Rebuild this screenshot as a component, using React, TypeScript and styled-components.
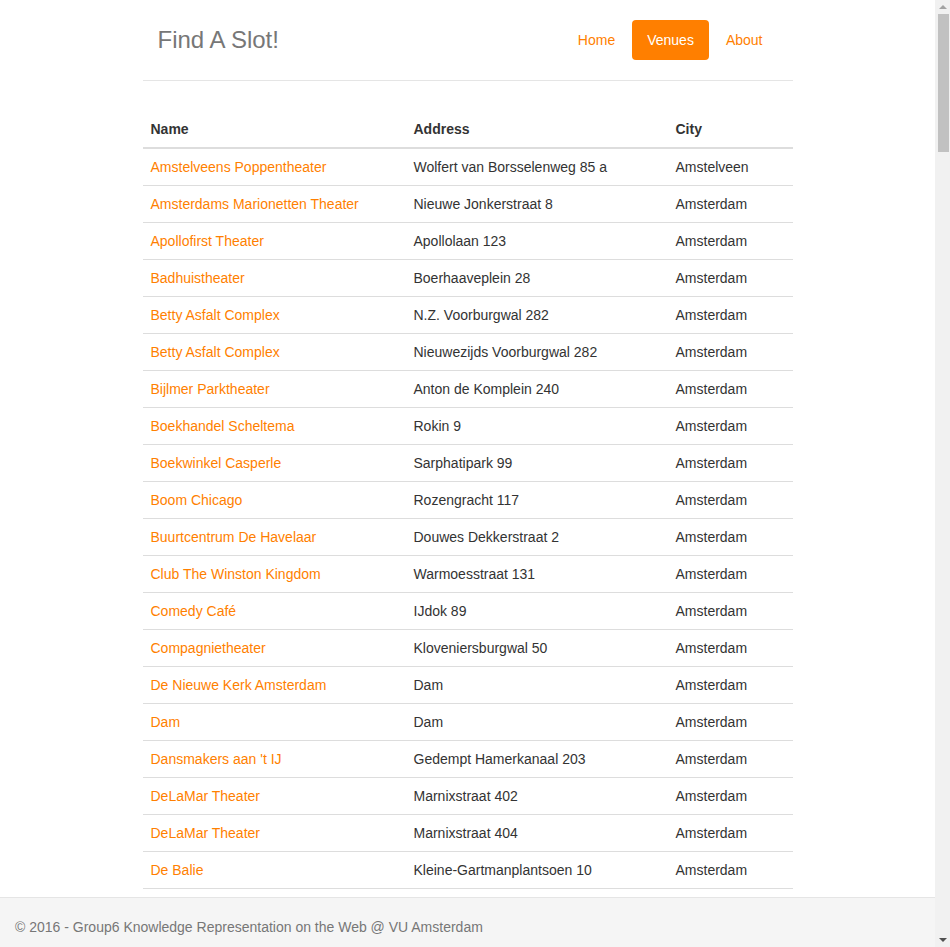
import styled, { createGlobalStyle } from 'styled-components';

const GlobalStyle = createGlobalStyle`
    html, body {
        margin: 0;
        padding: 0;
    }

    body {
        font-family: 'Liberation Sans', Arial, sans-serif;
        font-size: 14px;
        line-height: 1.42857143;
        color: #333333;
        background: #ffffff;
    }

    a {
        color: #ff7f00;
        text-decoration: none;
    }
`;

const ORANGE = '#ff7f00';
const SCROLLBAR_WIDTH = 15;

const NAV_LINKS = [
    { label: 'Home', active: false },
    { label: 'Venues', active: true },
    { label: 'About', active: false },
];

const VENUES = [
    ['Amstelveens Poppentheater', 'Wolfert van Borsselenweg 85 a', 'Amstelveen'],
    ['Amsterdams Marionetten Theater', 'Nieuwe Jonkerstraat 8', 'Amsterdam'],
    ['Apollofirst Theater', 'Apollolaan 123', 'Amsterdam'],
    ['Badhuistheater', 'Boerhaaveplein 28', 'Amsterdam'],
    ['Betty Asfalt Complex', 'N.Z. Voorburgwal 282', 'Amsterdam'],
    ['Betty Asfalt Complex', 'Nieuwezijds Voorburgwal 282', 'Amsterdam'],
    ['Bijlmer Parktheater', 'Anton de Komplein 240', 'Amsterdam'],
    ['Boekhandel Scheltema', 'Rokin 9', 'Amsterdam'],
    ['Boekwinkel Casperle', 'Sarphatipark 99', 'Amsterdam'],
    ['Boom Chicago', 'Rozengracht 117', 'Amsterdam'],
    ['Buurtcentrum De Havelaar', 'Douwes Dekkerstraat 2', 'Amsterdam'],
    ['Club The Winston Kingdom', 'Warmoesstraat 131', 'Amsterdam'],
    ['Comedy Café', 'IJdok 89', 'Amsterdam'],
    ['Compagnietheater', 'Kloveniersburgwal 50', 'Amsterdam'],
    ['De Nieuwe Kerk Amsterdam', 'Dam', 'Amsterdam'],
    ['Dam', 'Dam', 'Amsterdam'],
    ["Dansmakers aan 't IJ", 'Gedempt Hamerkanaal 203', 'Amsterdam'],
    ['DeLaMar Theater', 'Marnixstraat 402', 'Amsterdam'],
    ['DeLaMar Theater', 'Marnixstraat 404', 'Amsterdam'],
    ['De Balie', 'Kleine-Gartmanplantsoen 10', 'Amsterdam'],
    ['De Brakke Grond', 'Nes 45', 'Amsterdam'],
    ['De Kleine Komedie', 'Amstel 56', 'Amsterdam'],
    ['De Meervaart', 'Meer en Vaart 300', 'Amsterdam'],
];

const Page = styled.div`
    margin-right: ${SCROLLBAR_WIDTH}px;
    padding-bottom: 60px;
`;

const Container = styled.div`
    max-width: 650px;
    margin: 0 auto;
    padding-top: 20px;
`;

const Header = styled.div`
    display: flex;
    justify-content: space-between;
    align-items: center;
    padding: 0 15px 20px;
    border-bottom: 1px solid #e5e5e5;
`;

const Title = styled.h3`
    margin: 0;
    font-size: 24px;
    font-weight: 500;
    line-height: 40px;
    color: #777777;
`;

const Nav = styled.ul`
    display: flex;
    gap: 2px;
    list-style: none;
    margin: 0;
    padding: 0;
`;

const NavItem = styled.a<{ $active?: boolean }>`
    display: block;
    padding: 10px 15px;
    border-radius: 4px;
    line-height: 20px;
    color: ${(p) => (p.$active ? '#ffffff' : ORANGE)};
    background: ${(p) => (p.$active ? ORANGE : 'transparent')};
`;

const Table = styled.table`
    width: 100%;
    margin: 30px 0 20px;
    border-collapse: collapse;
    border-spacing: 0;

    th,
    td {
        padding: 8px;
        line-height: 20px;
        text-align: left;
        vertical-align: top;
    }

    th {
        font-weight: bold;
        border-bottom: 2px solid #dddddd;
    }

    td {
        border-top: 1px solid #dddddd;
    }

    tbody tr:first-child td {
        border-top: 0;
    }
`;

const NameCol = styled.th`
    width: 247px;
`;

const AddressCol = styled.th`
    width: 246px;
`;

const Footer = styled.footer`
    position: fixed;
    left: 0;
    right: ${SCROLLBAR_WIDTH}px;
    bottom: 0;
    height: 50px;
    box-sizing: border-box;
    padding: 19px 15px 0;
    line-height: 20px;
    background: #f5f5f5;
    border-top: 1px solid #e5e5e5;
    color: #777777;
`;

/* classic browser scrollbar, drawn over the right edge */
const ScrollRail = styled.div`
    position: fixed;
    top: 0;
    right: 0;
    bottom: 0;
    width: ${SCROLLBAR_WIDTH}px;
    background: #f1f1f1;
    display: flex;
    flex-direction: column;
    align-items: center;
`;

const ArrowButton = styled.div<{ $down?: boolean; $color: string }>`
    height: 14px;
    width: 100%;
    display: flex;
    align-items: center;
    justify-content: center;

    &::before {
        content: '';
        width: 0;
        height: 0;
        border-left: 4px solid transparent;
        border-right: 4px solid transparent;
        ${(p) =>
            p.$down
                ? `border-top: 4px solid ${p.$color};`
                : `border-bottom: 4px solid ${p.$color};`}
    }
`;

const Thumb = styled.div`
    width: 11px;
    height: 138px;
    margin-left: 1px;
    background: #c1c1c1;
`;

const Spacer = styled.div`
    flex: 1;
`;

const App = () => {
    return (
        <>
            <GlobalStyle />
            <Page>
                <Container>
                    <Header>
                        <Title>Find A Slot!</Title>
                        <Nav>
                            {NAV_LINKS.map((link) => (
                                <li key={link.label}>
                                    <NavItem href="#" $active={link.active}>
                                        {link.label}
                                    </NavItem>
                                </li>
                            ))}
                        </Nav>
                    </Header>

                    <Table>
                        <thead>
                            <tr>
                                <NameCol>Name</NameCol>
                                <AddressCol>Address</AddressCol>
                                <th>City</th>
                            </tr>
                        </thead>
                        <tbody>
                            {VENUES.map(([name, address, city], key) => (
                                <tr key={key}>
                                    <td>
                                        <a href="#">{name}</a>
                                    </td>
                                    <td>{address}</td>
                                    <td>{city}</td>
                                </tr>
                            ))}
                        </tbody>
                    </Table>
                </Container>
            </Page>

            <Footer>© 2016 - Group6 Knowledge Representation on the Web @ VU Amsterdam</Footer>

            <ScrollRail>
                <ArrowButton $color="#a3a3a3" />
                <Thumb />
                <Spacer />
                <ArrowButton $down $color="#505050" />
            </ScrollRail>
        </>
    );
};

export default App;
